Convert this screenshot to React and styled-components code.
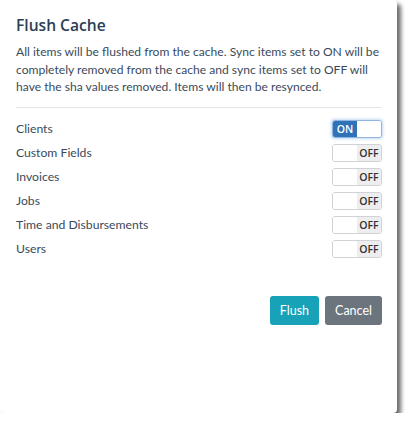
import React, { useState } from 'react';
import styled, { createGlobalStyle } from 'styled-components';

const GlobalStyle = createGlobalStyle`
  html, body {
    margin: 0;
    padding: 0;
    background: #ffffff;
  }
  body {
    font-family: Lato, "Open Sans", "Liberation Sans", sans-serif;
  }
`;

const Dialog = styled.div`
  box-sizing: border-box;
  width: 397px;
  height: 413px;
  background: #ffffff;
  border-radius: 4px;
  box-shadow: 4px 4px 4px rgba(60, 60, 60, 0.75);
  padding: 14px 15px 16px 16px;
  display: flex;
  flex-direction: column;
`;

const Title = styled.h2`
  margin: 0 0 7px 0;
  font-family: "Open Sans", Lato, "Liberation Sans", sans-serif;
  font-size: 15.6px;
  font-weight: 600;
  color: #2b3f55;
  line-height: 22px;
`;

const Description = styled.p`
  margin: 0;
  font-size: 12.1px;
  line-height: 17.5px;
  color: #3a4a5c;
`;

const Divider = styled.hr`
  border: none;
  border-top: 1px solid #e3e6ea;
  margin: 11px 0 12px 0;
`;

const ItemList = styled.div`
  display: flex;
  flex-direction: column;
  gap: 6px;
`;

const Row = styled.div`
  display: flex;
  align-items: center;
  justify-content: space-between;
  height: 18px;
`;

const RowLabel = styled.span`
  font-size: 12.2px;
  color: #3a4a5c;
`;

const Toggle = styled.button`
  box-sizing: border-box;
  width: 50px;
  height: 18px;
  padding: 0;
  display: flex;
  border: 1px solid ${p => (p.$on ? '#8fb5e0' : '#cfd3d8')};
  border-radius: 3px;
  background: #ffffff;
  overflow: hidden;
  cursor: pointer;
  box-shadow: ${p => (p.$on ? '0 0 3px 1px rgba(120, 170, 230, 0.45)' : 'none')};
`;

const ToggleHalf = styled.span`
  flex: 1;
  display: flex;
  align-items: center;
  justify-content: center;
  font-family: "Open Sans", "Liberation Sans", sans-serif;
  font-size: 10.5px;
  font-weight: 600;
  background: ${p => p.$bg};
  color: ${p => p.$color};
  height: 100%;
`;

const Footer = styled.div`
  display: flex;
  justify-content: flex-end;
  gap: 6px;
  margin-top: 38px;
`;

const Button = styled.button`
  box-sizing: border-box;
  height: 29px;
  padding: 0 10px;
  border: none;
  border-radius: 3px;
  font-family: Lato, "Open Sans", "Liberation Sans", sans-serif;
  font-size: 12.5px;
  color: #ffffff;
  background: ${p => (p.$variant === 'primary' ? '#17a2b8' : '#6c757d')};
  cursor: pointer;
`;

const items = [
  { name: 'Clients', on: true },
  { name: 'Custom Fields', on: false },
  { name: 'Invoices', on: false },
  { name: 'Jobs', on: false },
  { name: 'Time and Disbursements', on: false },
  { name: 'Users', on: false }
];

function Switch({ on, onClick }) {
  return (
    <Toggle $on={on} onClick={onClick}>
      {on ? (
        <>
          <ToggleHalf $bg="#2f72b8" $color="#ffffff">ON</ToggleHalf>
          <ToggleHalf $bg="#ffffff" />
        </>
      ) : (
        <>
          <ToggleHalf $bg="#ffffff" />
          <ToggleHalf $bg="#eeeeee" $color="#333333">OFF</ToggleHalf>
        </>
      )}
    </Toggle>
  );
}

export default function App() {
  const [state, setState] = useState(items);

  const flip = idx => {
    setState(s => s.map((it, i) => (i === idx ? { ...it, on: !it.on } : it)));
  };

  return (
    <>
      <GlobalStyle />
      <Dialog>
        <Title>Flush Cache</Title>
        <Description>
          All items will be flushed from the cache. Sync items set to ON will be
          completely removed from the cache and sync items set to OFF will have
          the sha values removed. Items will then be resynced.
        </Description>
        <Divider />
        <ItemList>
          {state.map((it, i) => (
            <Row key={it.name}>
              <RowLabel>{it.name}</RowLabel>
              <Switch on={it.on} onClick={() => flip(i)} />
            </Row>
          ))}
        </ItemList>
        <Footer>
          <Button $variant="primary">Flush</Button>
          <Button>Cancel</Button>
        </Footer>
      </Dialog>
    </>
  );
}
